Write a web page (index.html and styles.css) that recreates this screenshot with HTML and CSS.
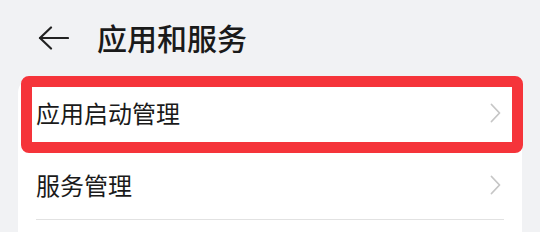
FILE: index.html
```html
<!DOCTYPE html>
<html lang="zh">
<head>
<meta charset="utf-8">
<link rel="stylesheet" href="styles.css">
</head>
<body>
<header class="topbar">
  <svg class="back" width="31" height="24" viewBox="0 0 31 24" fill="none" stroke="#222" stroke-width="2.2" stroke-linecap="round" stroke-linejoin="round">
    <path d="M2 12 H30"/>
    <path d="M13 1.5 L2 12 L13 22.5"/>
  </svg>
  <h1 class="title">应用和服务</h1>
</header>
<section class="card">
  <div class="row">
    <span class="label">应用启动管理</span>
    <svg class="chev" width="11" height="20" viewBox="0 0 11 20" fill="none" stroke="#c6c6c6" stroke-width="1.8" stroke-linecap="round" stroke-linejoin="round"><path d="M1.5 1.5 L9.5 10 L1.5 18.5"/></svg>
  </div>
  <div class="row last">
    <span class="label">服务管理</span>
    <svg class="chev" width="11" height="20" viewBox="0 0 11 20" fill="none" stroke="#c6c6c6" stroke-width="1.8" stroke-linecap="round" stroke-linejoin="round"><path d="M1.5 1.5 L9.5 10 L1.5 18.5"/></svg>
  </div>
  <div class="highlight"></div>
</section>
</body>
</html>
```
FILE: styles.css
```css
html, body {
  margin: 0;
  padding: 0;
  background: #f1f2f4;
  font-family: "Noto Sans CJK SC", "Noto Sans", sans-serif;
  color: #1a1a1a;
}
.topbar {
  height: 77px;
  display: flex;
  align-items: center;
  padding-left: 38px;
  box-sizing: border-box;
}
.back {
  display: block;
  margin-top: -2px;
}
.title {
  margin: 0 0 0 28px;
  font-size: 30px;
  font-weight: 500;
  line-height: 1;
  margin-top: -4px;
}
.card {
  position: relative;
  margin: 0 18px;
  background: #fff;
  border-radius: 16px 16px 0 0;
  height: 160px;
}
.row {
  height: 72px;
  display: flex;
  align-items: center;
  justify-content: space-between;
  padding: 0 21px 0 18px;
  position: relative;
}
.row.last::after {
  content: "";
  position: absolute;
  left: 18px;
  right: 18px;
  bottom: 1px;
  height: 1px;
  background: #e2e2e2;
}
.label {
  font-size: 24px;
  line-height: 1;
}
.chev {
  display: block;
}
.highlight {
  position: absolute;
  top: -1px;
  left: 3px;
  width: 502px;
  height: 77px;
  box-sizing: border-box;
  border: 11px solid #f5343a;
  border-radius: 8px;
}
```
